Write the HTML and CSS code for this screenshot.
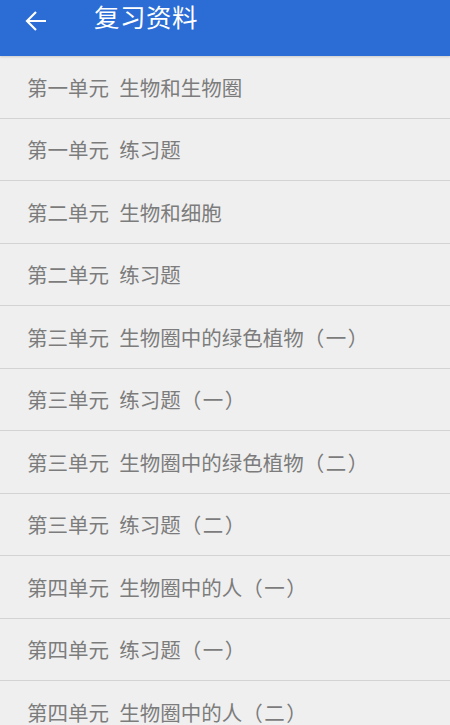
FILE: index.html
```html
<!DOCTYPE html>
<html lang="zh-CN">
<head>
  <meta charset="UTF-8" />
  <meta name="viewport" content="width=device-width, initial-scale=1.0"/>
  <title>复习资料</title>
  <link rel="stylesheet" href="styles.css">
</head>
<body>
  <div class="top-bar">
    <svg class="back-icon" viewBox="0 0 22 22" width="22" height="22">
      <path d="M21 11H2M11 2L2 11l9 9" fill="none" stroke="#fff" stroke-width="2.2"/>
    </svg>
    <div class="title">复习资料</div>
  </div>

  <div class="list">
    <div class="item">第一单元&nbsp;&nbsp;生物和生物圈</div>
    <div class="item">第一单元&nbsp;&nbsp;练习题</div>
    <div class="item">第二单元&nbsp;&nbsp;生物和细胞</div>
    <div class="item">第二单元&nbsp;&nbsp;练习题</div>
    <div class="item">第三单元&nbsp;&nbsp;生物圈中的绿色植物<span class="paren">（一）</span></div>
    <div class="item">第三单元&nbsp;&nbsp;练习题<span class="paren">（一）</span></div>
    <div class="item">第三单元&nbsp;&nbsp;生物圈中的绿色植物<span class="paren">（二）</span></div>
    <div class="item">第三单元&nbsp;&nbsp;练习题<span class="paren">（二）</span></div>
    <div class="item">第四单元&nbsp;&nbsp;生物圈中的人<span class="paren">（一）</span></div>
    <div class="item">第四单元&nbsp;&nbsp;练习题<span class="paren">（一）</span></div>
    <div class="item">第四单元&nbsp;&nbsp;生物圈中的人<span class="paren">（二）</span></div>
  </div>
</body>
</html>
```

FILE: styles.css
```css
body {
  margin: 0;
  font-family: Roboto, "Noto Sans CJK SC", sans-serif;
  background-color: #efefef;
  overflow: hidden;
}

.top-bar {
  background-color: #2b6dd5;
  height: 56px;
  display: flex;
  align-items: flex-start;
  padding-left: 25px;
  box-sizing: border-box;
  box-shadow: 0 1px 2px rgba(0, 0, 0, 0.15);
}

.back-icon {
  width: 22px;
  height: 22px;
  margin-top: 10px;
}

.title {
  color: white;
  font-size: 25.5px;
  line-height: 26px;
  margin-left: 47px;
  margin-top: 5px;
  letter-spacing: 0.5px;
}

.item {
  height: 61.5px;
  display: flex;
  align-items: center;
  padding-left: 27px;
  font-size: 20.5px;
  color: #7c7c7c;
  border-bottom: 1px solid #d3d3d3;
}

.paren {
  letter-spacing: 1.5px;
}
```
